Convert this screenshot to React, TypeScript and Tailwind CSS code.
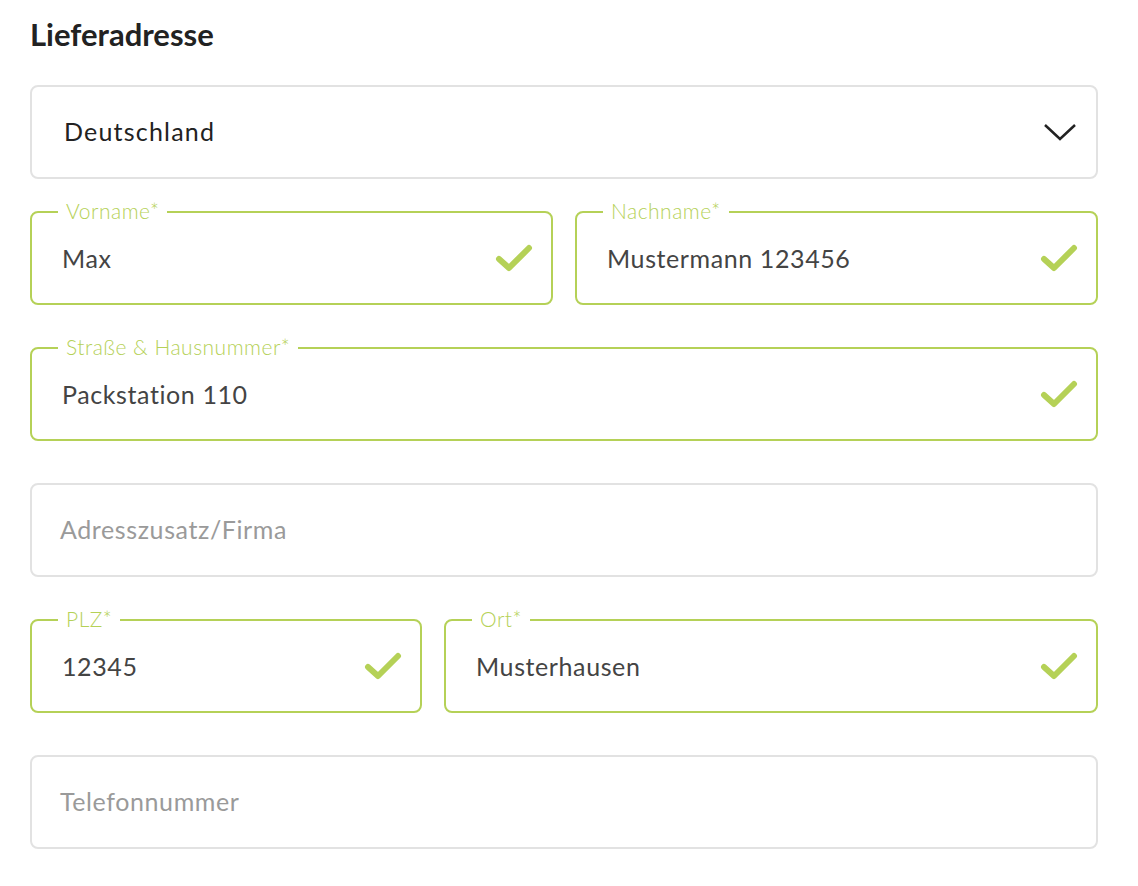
import React from "react";

const G = "#b5d157";

function Check() {
  return (
    <svg width="38" height="30" viewBox="0 0 38 30" className="shrink-0">
      <path d="M4 16 L14 25 L34 5" fill="none" stroke={G} strokeWidth="6" strokeLinecap="round" strokeLinejoin="round" />
    </svg>
  );
}

function Valid({ label, value, className = "" }: { label: string; value: string; className?: string }) {
  return (
    <div className={`relative h-[94px] rounded-[8px] border-2 border-[#b5d157] flex items-center pl-[30px] pr-[18px] ${className}`}>
      <span className="absolute -top-[15px] left-[26px] bg-white px-[8px] text-[21px] leading-[26px] font-light text-[#b5d157] tracking-[0.5px]">{label}</span>
      <span className="flex-1 text-[25px] text-[#444] tracking-[0.6px] pt-[2px]">{value}</span>
      <Check />
    </div>
  );
}

function Empty({ placeholder }: { placeholder: string }) {
  return (
    <div className="h-[94px] rounded-[8px] border-2 border-[#e2e2e2] flex items-center pl-[28px] text-[25px] text-[#9a9a9a] tracking-[0.6px]">
      {placeholder}
    </div>
  );
}

export default function App() {
  return (
    <div className="bg-white w-[1138px] h-[886px] px-[30px] pt-[14px]" style={{ fontFamily: "Lato, 'Open Sans', sans-serif" }}>
      <h1 className="text-[31px] font-bold text-[#222] leading-[40px] mb-[31px]">Lieferadresse</h1>
      <div className="flex flex-col gap-[42px] w-[1068px]">
        <div className="h-[94px] -mb-[10px] rounded-[8px] border-2 border-[#e2e2e2] flex items-center pl-[32px] pr-[18px]">
          <span className="flex-1 text-[25px] text-[#222] tracking-[1.2px]">Deutschland</span>
          <svg width="36" height="20" viewBox="0 0 36 20"><path d="M3 3 L18 17 L33 3" fill="none" stroke="#222" strokeWidth="2.5" /></svg>
        </div>
        <div className="flex gap-[22px]">
          <Valid className="flex-1" label="Vorname*" value="Max" />
          <Valid className="flex-1" label="Nachname*" value="Mustermann 123456" />
        </div>
        <Valid label="Straße & Hausnummer*" value="Packstation 110" />
        <Empty placeholder="Adresszusatz/Firma" />
        <div className="flex gap-[22px]">
          <Valid className="w-[392px]" label="PLZ*" value="12345" />
          <Valid className="flex-1" label="Ort*" value="Musterhausen" />
        </div>
        <Empty placeholder="Telefonnummer" />
      </div>
    </div>
  );
}
